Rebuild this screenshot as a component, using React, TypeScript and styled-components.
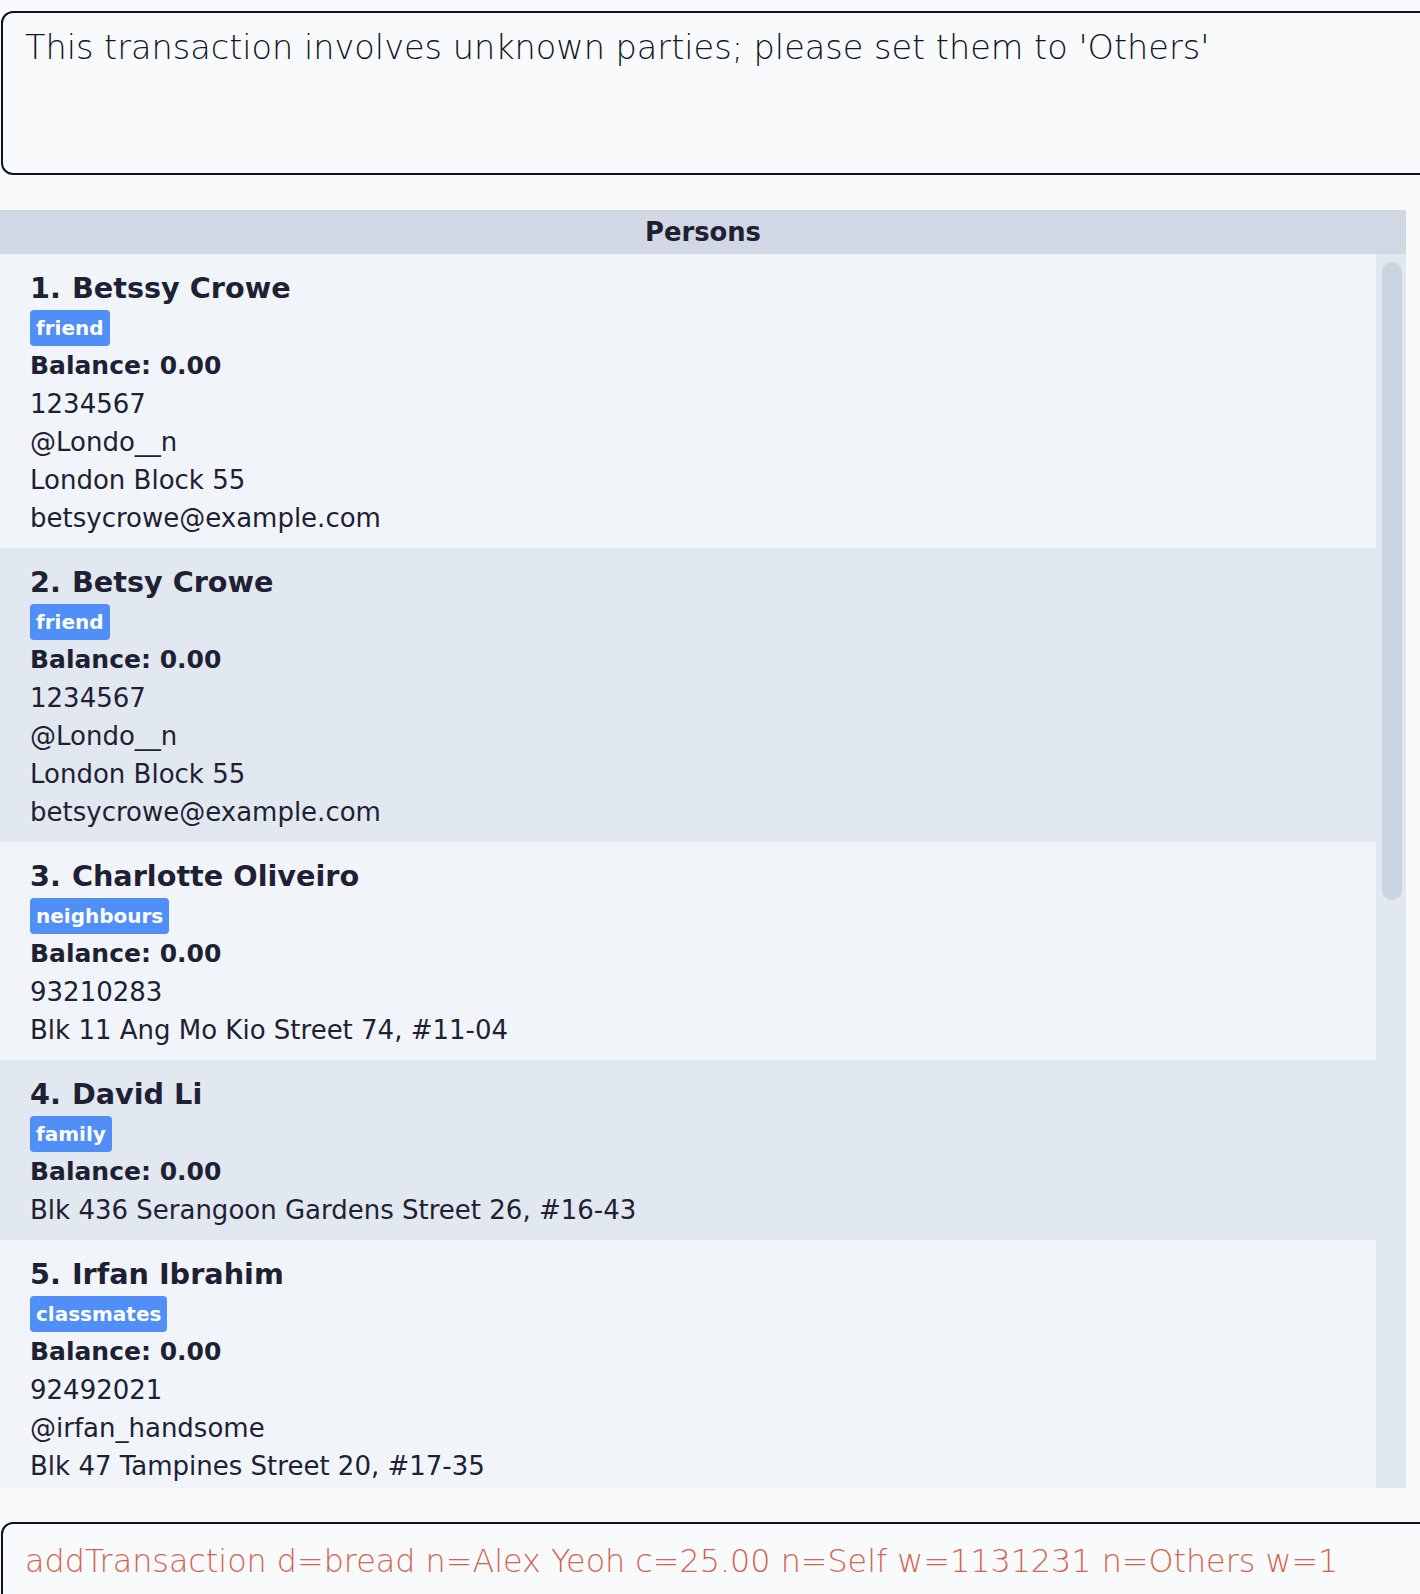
import styled, { createGlobalStyle } from 'styled-components'

interface Person {
  readonly name: string
  readonly tag: string
  readonly details: readonly string[]
}

const persons: readonly Person[] = [
  {
    name: 'Betssy Crowe',
    tag: 'friend',
    details: ['1234567', '@Londo__n', 'London Block 55', 'betsycrowe@example.com'],
  },
  {
    name: 'Betsy Crowe',
    tag: 'friend',
    details: ['1234567', '@Londo__n', 'London Block 55', 'betsycrowe@example.com'],
  },
  {
    name: 'Charlotte Oliveiro',
    tag: 'neighbours',
    details: ['93210283', 'Blk 11 Ang Mo Kio Street 74, #11-04'],
  },
  {
    name: 'David Li',
    tag: 'family',
    details: ['Blk 436 Serangoon Gardens Street 26, #16-43'],
  },
  {
    name: 'Irfan Ibrahim',
    tag: 'classmates',
    details: ['92492021', '@irfan_handsome', 'Blk 47 Tampines Street 20, #17-35'],
  },
]

export default function App() {
  return (
    <>
      <GlobalStyle />
      <Page>
        <ResultBox>This transaction involves unknown parties; please set them to 'Others'</ResultBox>

        <PersonsPanel>
          <PanelHeader>Persons</PanelHeader>
          <ListRow>
            <CardList>
              {persons.map((person, i) => (
                <PersonCard key={person.name} $even={i % 2 === 1}>
                  <NameLine>
                    <Index>{i + 1}.</Index>
                    {person.name}
                  </NameLine>
                  <TagRow>
                    <Tag>{person.tag}</Tag>
                  </TagRow>
                  <Balance>Balance: 0.00</Balance>
                  {person.details.map(line => (
                    <Detail key={line}>{line}</Detail>
                  ))}
                </PersonCard>
              ))}
            </CardList>
            <ScrollTrack>
              <ScrollThumb />
            </ScrollTrack>
          </ListRow>
        </PersonsPanel>

        <CommandBox>addTransaction d=bread n=Alex Yeoh c=25.00 n=Self w=1131231 n=Others w=1</CommandBox>
      </Page>
    </>
  )
}

const GlobalStyle = createGlobalStyle`
  html, body {
    margin: 0;
    padding: 0;
    background: #f8fafc;
    overflow: hidden;
  }

  body {
    font-family: "DejaVu Sans", "Noto Sans", sans-serif;
    color: #1e2134;
  }
`

const Page = styled.div`
  display: flex;
  flex-direction: column;
  height: 1594px;
  padding-top: 11px;
  box-sizing: border-box;
  overflow: hidden;
`

const ResultBox = styled.div`
  flex: none;
  box-sizing: border-box;
  height: 164px;
  width: 1460px;
  margin-left: 1px;
  padding: 15px 22px;
  border: 2px solid #0e1424;
  border-radius: 12px;
  background: #f8fafc;
  font-size: 33.5px;
  font-weight: 300;
  line-height: 40px;
  color: #0f1526;
  white-space: nowrap;
`

const PersonsPanel = styled.section`
  flex: none;
  display: flex;
  flex-direction: column;
  width: 1406px;
  margin-top: 35px;
`

const PanelHeader = styled.div`
  display: flex;
  align-items: center;
  justify-content: center;
  height: 44px;
  background: #d1d8e3;
  font-size: 25.8px;
  font-weight: 700;
`

const ListRow = styled.div`
  display: flex;
  height: 1234px;
`

const CardList = styled.div`
  flex: 1;
  overflow: hidden;
`

const PersonCard = styled.div<{ $even: boolean }>`
  padding: 12px 30px 11px;
  background: ${p => (p.$even ? '#e2e8f0' : '#f1f5f9')};
`

const NameLine = styled.div`
  font-size: 28.7px;
  font-weight: 700;
  line-height: 44px;
  white-space: nowrap;
`

const Index = styled.span`
  margin-right: 11px;
`

const TagRow = styled.div`
  display: flex;
  margin-bottom: 1px;
`

const Tag = styled.span`
  display: inline-flex;
  align-items: center;
  height: 36px;
  padding: 0 6px;
  border-radius: 4px;
  background: #4f8ff7;
  color: #ffffff;
  font-size: 20px;
  font-weight: 700;
`

const Balance = styled.div`
  font-size: 25px;
  font-weight: 700;
  line-height: 38px;
`

const Detail = styled.div`
  font-size: 26px;
  line-height: 38px;
  white-space: nowrap;
`

const ScrollTrack = styled.div`
  flex: none;
  width: 30px;
  box-sizing: border-box;
  padding: 8px 4px 0 6px;
  background: #e2e8f0;
`

const ScrollThumb = styled.div`
  height: 638px;
  border-radius: 10px;
  background: #cbd5e1;
`

const CommandBox = styled.div`
  flex: none;
  box-sizing: border-box;
  height: 120px;
  width: 1460px;
  margin: 34px 0 0 1px;
  padding: 17px 22px;
  border: 2px solid #0e1424;
  border-radius: 12px;
  background: #f8fafc;
  font-size: 31.8px;
  font-weight: 300;
  line-height: 40px;
  color: #d2654f;
  white-space: nowrap;
`
